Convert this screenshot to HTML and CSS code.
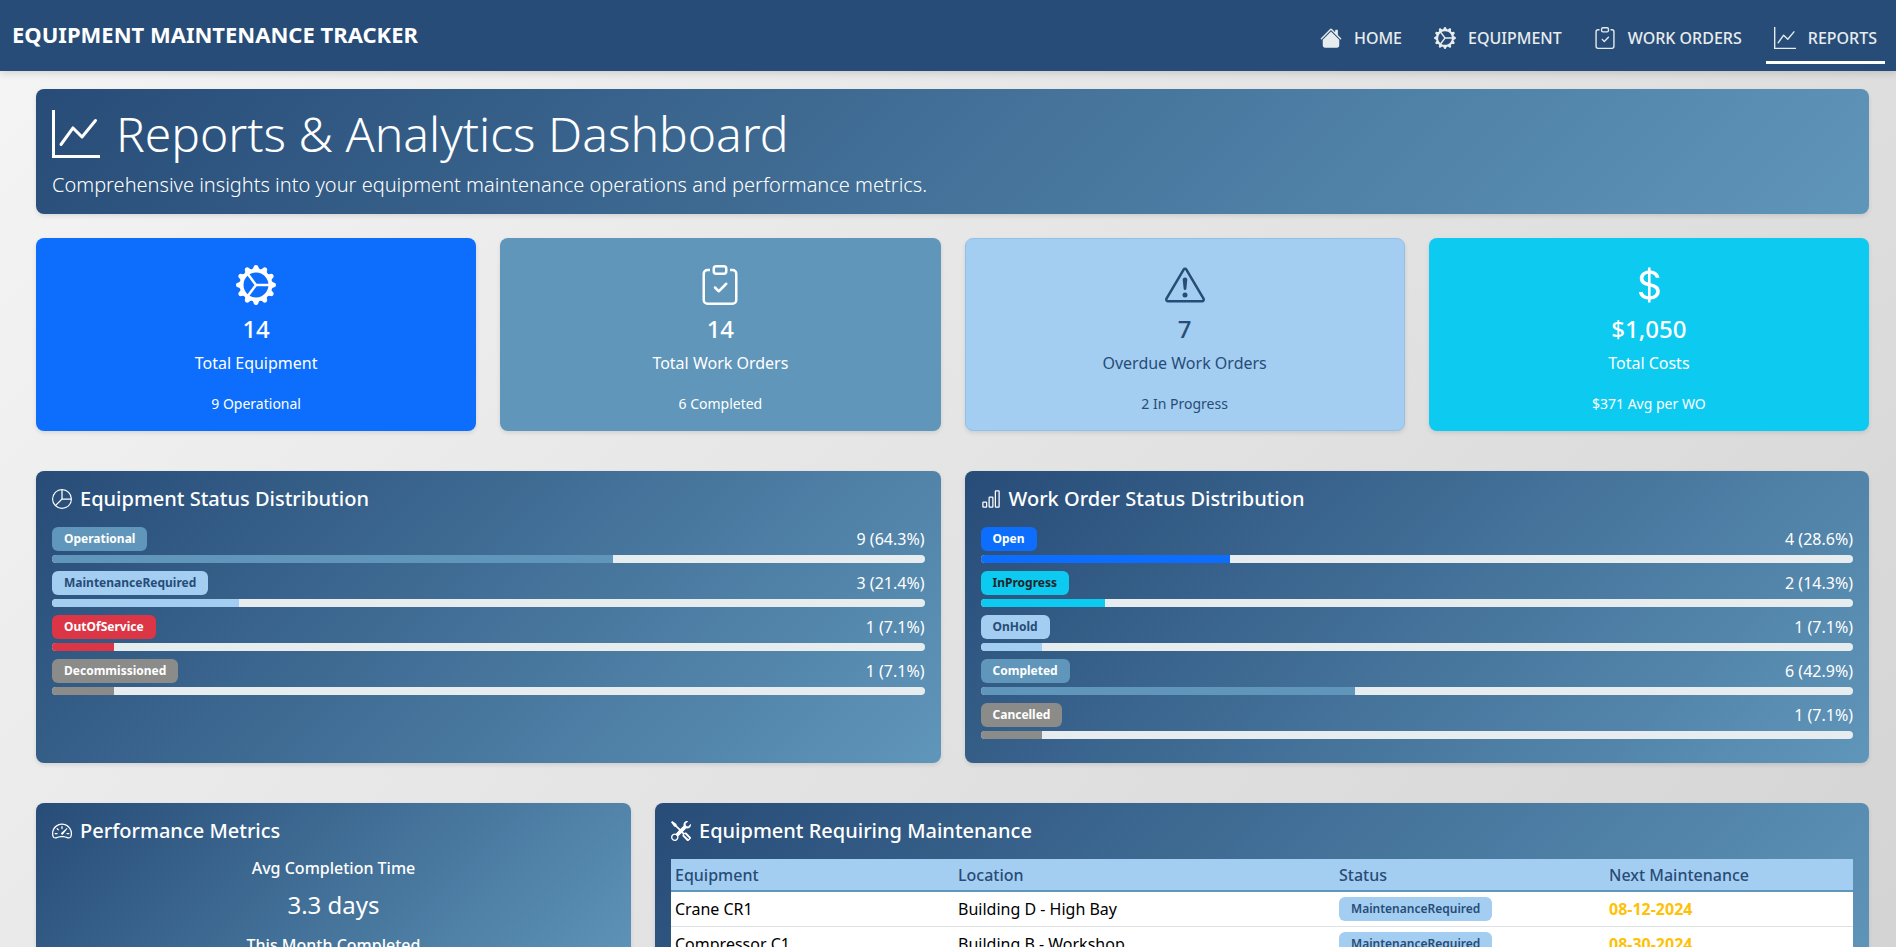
FILE: index.html
```html
<!DOCTYPE html>
<html lang="en">
<head>
    <meta charset="UTF-8">
    <meta name="viewport" content="width=device-width, initial-scale=1.0">
    <title>Reports - Equipment Maintenance Tracker</title>
    <link rel="stylesheet" href="styles.css">
</head>
<body>

    <svg class="sprite" xmlns="http://www.w3.org/2000/svg">
        <symbol id="i-home" viewBox="0 0 16 16"><path d="M8.707 1.5a1 1 0 0 0-1.414 0L.646 8.146a.5.5 0 0 0 .708.708L8 2.207l6.646 6.647a.5.5 0 0 0 .708-.708L13 5.793V2.5a.5.5 0 0 0-.5-.5h-1a.5.5 0 0 0-.5.5v1.293L8.707 1.5Z"/><path d="m8 3.293 6 6V13.5a1.5 1.5 0 0 1-1.5 1.5h-9A1.5 1.5 0 0 1 2 13.5V9.293l6-6Z"/></symbol>
        <symbol id="i-gear" viewBox="0 0 16 16"><path d="M7.068.727c.243-.97 1.62-.97 1.864 0l.071.286a.96.96 0 0 0 1.622.434l.205-.211c.695-.719 1.888-.03 1.613.931l-.08.284a.96.96 0 0 0 1.187 1.187l.283-.081c.96-.275 1.65.918.931 1.613l-.211.205a.96.96 0 0 0 .434 1.622l.286.071c.97.243.97 1.62 0 1.864l-.286.071a.96.96 0 0 0-.434 1.622l.211.205c.719.695.03 1.888-.931 1.613l-.284-.08a.96.96 0 0 0-1.187 1.187l.081.283c.275.96-.918 1.65-1.613.931l-.205-.211a.96.96 0 0 0-1.622.434l-.071.286c-.243.97-1.62.97-1.864 0l-.071-.286a.96.96 0 0 0-1.622-.434l-.205.211c-.695.719-1.888.03-1.613-.931l.08-.284a.96.96 0 0 0-1.186-1.187l-.284.081c-.96.275-1.65-.918-.931-1.613l.211-.205a.96.96 0 0 0-.434-1.622l-.286-.071c-.97-.243-.97-1.62 0-1.864l.286-.071a.96.96 0 0 0 .434-1.622l-.211-.205c-.719-.695-.03-1.888.931-1.613l.284.08a.96.96 0 0 0 1.187-1.186l-.081-.284c-.275-.96.918-1.65 1.613-.931l.205.211a.96.96 0 0 0 1.622-.434l.071-.286zM12.973 8.5H8.25l-2.834 3.779A4.998 4.998 0 0 0 12.973 8.5zm0-1a4.998 4.998 0 0 0-7.557-3.779l2.834 3.78h4.723zM5.048 3.967c-.03.021-.058.043-.087.065l.087-.065zm-.431.355A4.984 4.984 0 0 0 3.002 8c0 1.455.622 2.765 1.615 3.678L7.375 8 4.617 4.322zm.344 7.646.087.065-.087-.065z"/></symbol>
        <symbol id="i-clipboard" viewBox="0 0 16 16"><path fill-rule="evenodd" d="M10.854 7.146a.5.5 0 0 1 0 .708l-3 3a.5.5 0 0 1-.708 0l-1.5-1.5a.5.5 0 1 1 .708-.708L7.5 9.793l2.646-2.647a.5.5 0 0 1 .708 0z"/><path d="M4 1.5H3a2 2 0 0 0-2 2V14a2 2 0 0 0 2 2h10a2 2 0 0 0 2-2V3.5a2 2 0 0 0-2-2h-1v1h1a1 1 0 0 1 1 1V14a1 1 0 0 1-1 1H3a1 1 0 0 1-1-1V3.5a1 1 0 0 1 1-1h1v-1z"/><path d="M9.5 1a.5.5 0 0 1 .5.5v1a.5.5 0 0 1-.5.5h-3a.5.5 0 0 1-.5-.5v-1a.5.5 0 0 1 .5-.5h3zm-3-1A1.5 1.5 0 0 0 5 1.5v1A1.5 1.5 0 0 0 6.5 4h3A1.5 1.5 0 0 0 11 2.5v-1A1.5 1.5 0 0 0 9.5 0h-3z"/></symbol>
        <symbol id="i-graph" viewBox="0 0 16 16"><path fill-rule="evenodd" d="M0 0h1v15h15v1H0V0Zm14.817 3.113a.5.5 0 0 1 .07.704l-4.5 5.5a.5.5 0 0 1-.74.037L7.06 6.767l-3.656 5.027a.5.5 0 0 1-.808-.588l4-5.5a.5.5 0 0 1 .758-.06l2.609 2.61 4.15-5.073a.5.5 0 0 1 .704-.07Z"/></symbol>
        <symbol id="i-warning" viewBox="0 0 16 16"><path d="M7.938 2.016A.13.13 0 0 1 8.002 2a.13.13 0 0 1 .063.016.146.146 0 0 1 .054.057l6.857 11.667c.036.06.035.124.002.183a.163.163 0 0 1-.054.06.116.116 0 0 1-.066.017H1.146a.115.115 0 0 1-.066-.017.163.163 0 0 1-.054-.06.176.176 0 0 1 .002-.183L7.884 2.073a.147.147 0 0 1 .054-.057zm1.044-.45a1.13 1.13 0 0 0-1.96 0L.165 13.233c-.457.778.091 1.767.98 1.767h13.713c.889 0 1.438-.99.98-1.767L8.982 1.566z"/><path d="M7.002 12a1 1 0 1 1 2 0 1 1 0 0 1-2 0zM7.1 5.995a.905.905 0 1 1 1.8 0l-.35 3.507a.552.552 0 0 1-1.1 0L7.1 5.995z"/></symbol>
        <symbol id="i-dollar" viewBox="0 0 16 16"><path d="M4 10.781c.148 1.667 1.513 2.85 3.591 3.003V15h1.043v-1.216c2.27-.179 3.678-1.438 3.678-3.3 0-1.59-.947-2.51-2.956-3.028l-.722-.187V3.467c1.122.11 1.879.714 2.07 1.616h1.47c-.166-1.6-1.54-2.748-3.54-2.875V1H7.591v1.233c-1.939.23-3.27 1.472-3.27 3.156 0 1.454.966 2.483 2.661 2.917l.61.162v4.031c-1.149-.17-1.94-.8-2.131-1.718H4zm3.391-3.836c-1.043-.263-1.6-.825-1.6-1.616 0-.944.704-1.641 1.8-1.828v3.495l-.2-.05zm1.591 1.872c1.287.323 1.852.859 1.852 1.769 0 1.097-.826 1.828-2.2 1.939V8.73l.348.086z"/></symbol>
        <symbol id="i-pie" viewBox="0 0 16 16"><path d="M7.5 1.018a7 7 0 0 0-4.79 11.566L7.5 7.793V1.018zm1 0V7.5h6.482A7.001 7.001 0 0 0 8.5 1.018zM14.982 8.5H8.207l-4.79 4.79A7 7 0 0 0 14.982 8.5zM0 8a8 8 0 1 1 16 0A8 8 0 0 1 0 8z"/></symbol>
        <symbol id="i-bars" viewBox="0 0 16 16"><path d="M4 11H2v3h2v-3zm5-4H7v7h2V7zm5-5v12h-2V2h2zm-2-1a1 1 0 0 0-1 1v12a1 1 0 0 0 1 1h2a1 1 0 0 0 1-1V2a1 1 0 0 0-1-1h-2zM6 7a1 1 0 0 1 1-1h2a1 1 0 0 1 1 1v7a1 1 0 0 1-1 1H7a1 1 0 0 1-1-1V7zm-5 4a1 1 0 0 1 1-1h2a1 1 0 0 1 1 1v3a1 1 0 0 1-1 1H2a1 1 0 0 1-1-1v-3z"/></symbol>
        <symbol id="i-speed" viewBox="0 0 16 16"><path d="M8 4a.5.5 0 0 1 .5.5V6a.5.5 0 0 1-1 0V4.5A.5.5 0 0 1 8 4zM3.732 5.732a.5.5 0 0 1 .707 0l.915.914a.5.5 0 1 1-.708.708l-.914-.915a.5.5 0 0 1 0-.707zM2 10a.5.5 0 0 1 .5-.5h1.586a.5.5 0 0 1 0 1H2.5A.5.5 0 0 1 2 10zm9.5 0a.5.5 0 0 1 .5-.5h1.5a.5.5 0 0 1 0 1H12a.5.5 0 0 1-.5-.5zm.754-4.246a.389.389 0 0 0-.527-.02L7.547 9.31a.91.91 0 1 0 1.302 1.258l3.434-4.297a.389.389 0 0 0-.029-.518z"/><path fill-rule="evenodd" d="M0 10a8 8 0 1 1 15.547 2.661c-.442 1.253-1.845 1.602-2.932 1.25C11.309 13.488 9.475 13 8 13c-1.474 0-3.31.488-4.615.911-1.087.352-2.49.003-2.932-1.25A7.988 7.988 0 0 1 0 10zm8-7a7 7 0 0 0-6.603 9.329c.203.575.923.876 1.68.63C4.397 12.533 6.358 12 8 12s3.604.532 4.923.96c.757.245 1.477-.056 1.68-.631A7 7 0 0 0 8 3z"/></symbol>
        <symbol id="i-tools" viewBox="0 0 16 16"><path d="M1 0 0 1l2.2 3.081a1 1 0 0 0 .815.419h.07a1 1 0 0 1 .708.293l2.675 2.675-2.617 2.654A3.003 3.003 0 0 0 0 13a3 3 0 1 0 5.878-.851l2.654-2.617.968.968-.305.914a1 1 0 0 0 .242 1.023l3.27 3.27a.997.997 0 0 0 1.414 0l1.586-1.586a.997.997 0 0 0 0-1.414l-3.27-3.27a1 1 0 0 0-1.023-.242L10.5 9.5l-.96-.96 2.68-2.643A3.005 3.005 0 0 0 16 3c0-.269-.035-.53-.102-.777l-2.14 2.141L12 4l-.364-1.757L13.777.102a3 3 0 0 0-3.675 3.68L7.462 6.46 4.793 3.793a1 1 0 0 1-.293-.707v-.071a1 1 0 0 0-.419-.814L1 0Zm9.646 10.646a.5.5 0 0 1 .708 0l2.914 2.915a.5.5 0 0 1-.707.707l-2.915-2.914a.5.5 0 0 1 0-.708ZM3 11l.471.242.529.026.287.445.445.287.026.529L5 13l-.242.471-.026.529-.445.287-.287.445-.529.026L3 15l-.471-.242L2 14.732l-.287-.445L1.268 14l-.026-.529L1 13l.242-.471.026-.529.445-.287.287-.445.529-.026L3 11Z"/></symbol>
    </svg>

    <nav class="navbar">
        <a class="brand" href="#">Equipment Maintenance Tracker</a>
        <ul class="nav-links">
            <li><a href="#"><svg class="nav-icon"><use href="#i-home"/></svg>Home</a></li>
            <li><a href="#"><svg class="nav-icon"><use href="#i-gear"/></svg>Equipment</a></li>
            <li><a href="#"><svg class="nav-icon"><use href="#i-clipboard"/></svg>Work Orders</a></li>
            <li><a href="#" class="active"><svg class="nav-icon"><use href="#i-graph"/></svg>Reports</a></li>
        </ul>
    </nav>

    <main class="content">

        <header class="page-header">
            <h1><svg class="title-icon"><use href="#i-graph"/></svg>Reports &amp; Analytics Dashboard</h1>
            <p>Comprehensive insights into your equipment maintenance operations and performance metrics.</p>
        </header>

        <section class="row row-cards">
            <div class="stat-card stat-blue">
                <div class="stat-icon"><svg><use href="#i-gear"/></svg></div>
                <h3>14</h3>
                <p class="stat-label">Total Equipment</p>
                <small>9 Operational</small>
            </div>
            <div class="stat-card stat-steel">
                <div class="stat-icon"><svg><use href="#i-clipboard"/></svg></div>
                <h3>14</h3>
                <p class="stat-label">Total Work Orders</p>
                <small>6 Completed</small>
            </div>
            <div class="stat-card stat-light">
                <div class="stat-icon"><svg><use href="#i-warning"/></svg></div>
                <h3>7</h3>
                <p class="stat-label">Overdue Work Orders</p>
                <small>2 In Progress</small>
            </div>
            <div class="stat-card stat-cyan">
                <div class="stat-icon"><svg><use href="#i-dollar"/></svg></div>
                <h3>$1,050</h3>
                <p class="stat-label">Total Costs</p>
                <small>$371 Avg per WO</small>
            </div>
        </section>

        <section class="row row-charts">
            <div class="panel span-6">
                <h5><svg class="panel-icon"><use href="#i-pie"/></svg>Equipment Status Distribution</h5>
                <div class="dist-row">
                    <div class="dist-head"><span class="badge bg-steel">Operational</span><span>9 (64.3%)</span></div>
                    <div class="bar"><div class="bar-fill bg-steel" style="width: 64.3%"></div></div>
                </div>
                <div class="dist-row">
                    <div class="dist-head"><span class="badge bg-light">MaintenanceRequired</span><span>3 (21.4%)</span></div>
                    <div class="bar"><div class="bar-fill bg-light" style="width: 21.4%"></div></div>
                </div>
                <div class="dist-row">
                    <div class="dist-head"><span class="badge bg-red">OutOfService</span><span>1 (7.1%)</span></div>
                    <div class="bar"><div class="bar-fill bg-red" style="width: 7.1%"></div></div>
                </div>
                <div class="dist-row">
                    <div class="dist-head"><span class="badge bg-gray">Decommissioned</span><span>1 (7.1%)</span></div>
                    <div class="bar"><div class="bar-fill bg-gray" style="width: 7.1%"></div></div>
                </div>
            </div>
            <div class="panel span-6">
                <h5><svg class="panel-icon"><use href="#i-bars"/></svg>Work Order Status Distribution</h5>
                <div class="dist-row">
                    <div class="dist-head"><span class="badge bg-blue">Open</span><span>4 (28.6%)</span></div>
                    <div class="bar"><div class="bar-fill bg-blue" style="width: 28.6%"></div></div>
                </div>
                <div class="dist-row">
                    <div class="dist-head"><span class="badge bg-cyan">InProgress</span><span>2 (14.3%)</span></div>
                    <div class="bar"><div class="bar-fill bg-cyan" style="width: 14.3%"></div></div>
                </div>
                <div class="dist-row">
                    <div class="dist-head"><span class="badge bg-light">OnHold</span><span>1 (7.1%)</span></div>
                    <div class="bar"><div class="bar-fill bg-light" style="width: 7.1%"></div></div>
                </div>
                <div class="dist-row">
                    <div class="dist-head"><span class="badge bg-steel">Completed</span><span>6 (42.9%)</span></div>
                    <div class="bar"><div class="bar-fill bg-steel" style="width: 42.9%"></div></div>
                </div>
                <div class="dist-row">
                    <div class="dist-head"><span class="badge bg-gray">Cancelled</span><span>1 (7.1%)</span></div>
                    <div class="bar"><div class="bar-fill bg-gray" style="width: 7.1%"></div></div>
                </div>
            </div>
        </section>

        <section class="row">
            <div class="panel span-4">
                <h5><svg class="panel-icon"><use href="#i-speed"/></svg>Performance Metrics</h5>
                <div class="metric">
                    <h6>Avg Completion Time</h6>
                    <p>3.3 days</p>
                </div>
                <div class="metric">
                    <h6>This Month Completed</h6>
                </div>
            </div>
            <div class="panel span-8">
                <h5><svg class="panel-icon"><use href="#i-tools"/></svg>Equipment Requiring Maintenance</h5>
                <table class="maint-table">
                    <colgroup>
                        <col class="col-equipment">
                        <col class="col-location">
                        <col class="col-status">
                        <col class="col-next">
                    </colgroup>
                    <thead>
                        <tr><th>Equipment</th><th>Location</th><th>Status</th><th>Next Maintenance</th></tr>
                    </thead>
                    <tbody>
                        <tr>
                            <td>Crane CR1</td>
                            <td>Building D - High Bay</td>
                            <td><span class="badge bg-light">MaintenanceRequired</span></td>
                            <td class="due">08-12-2024</td>
                        </tr>
                        <tr>
                            <td>Compressor C1</td>
                            <td>Building B - Workshop</td>
                            <td><span class="badge bg-light">MaintenanceRequired</span></td>
                            <td class="due">08-30-2024</td>
                        </tr>
                    </tbody>
                </table>
            </div>
        </section>

    </main>

</body>
</html>
```

FILE: styles.css
```css
* {
    margin: 0;
    padding: 0;
    box-sizing: border-box;
}

body {
    font-family: "Noto Sans", Arial, sans-serif;
    font-size: 16px;
    line-height: 1.5;
    color: #212529;
    background: linear-gradient(135deg, #f5f5f5 0%, #d4d4d4 100%) fixed;
}

.sprite {
    display: none;
}

svg {
    fill: currentColor;
}

/* top bar */
.navbar {
    display: flex;
    justify-content: space-between;
    align-items: center;
    height: 71px;
    padding: 0 11px 0 12px;
    background-color: #274c77;
    box-shadow: 0 2px 8px rgba(0, 0, 0, 0.15);
}

.brand {
    color: white;
    font-size: 22px;
    font-weight: 700;
    text-transform: uppercase;
    text-decoration: none;
    padding-bottom: 2px;
}

.nav-links {
    list-style-type: none;
    display: flex;
    gap: 16px;
}

.nav-links a {
    display: flex;
    align-items: center;
    gap: 12px;
    height: 48px;
    padding: 0 8px;
    margin-top: 8px;
    color: #e7ecef;
    font-weight: 500;
    text-transform: uppercase;
    text-decoration: none;
    border-bottom: 3px solid transparent;
}

.nav-links a.active {
    border-bottom-color: white;
}

.nav-icon {
    width: 22px;
    height: 22px;
}

/* page */
.content {
    padding: 18px 27px 40px 36px;
}

.page-header {
    padding: 16px;
    margin-bottom: 24px;
    color: white;
    border-radius: 8px;
    background: linear-gradient(135deg, #274c77, #6096ba);
    box-shadow: 0 2px 4px rgba(0, 0, 0, 0.1);
}

.page-header h1 {
    display: flex;
    align-items: center;
    gap: 16px;
    font-size: 48px;
    font-weight: 300;
    line-height: 1.2;
    margin-bottom: 8px;
}

.title-icon {
    width: 48px;
    height: 48px;
}

.page-header p {
    font-size: 20px;
    font-weight: 300;
    line-height: 1.35;
}

.row {
    display: grid;
    grid-template-columns: repeat(12, 1fr);
    gap: 24px;
    margin-bottom: 40px;
}

/* stat cards */
.stat-card {
    grid-column: span 3;
    padding: 16px;
    text-align: center;
    color: white;
    border: 1px solid transparent;
    border-radius: 8px;
    box-shadow: 0 2px 4px rgba(0, 0, 0, 0.1);
}

.stat-blue { background-color: #0d6efd; }
.stat-steel { background-color: #6096ba; }
.stat-cyan { background-color: #0dcaf0; }

.stat-light {
    background-color: #a3cef1;
    border-color: #93c0e8;
    color: #274c77;
}

.stat-icon {
    height: 60px;
    display: flex;
    justify-content: center;
    align-items: center;
}

.stat-icon svg {
    width: 40px;
    height: 40px;
}

.stat-card h3 {
    font-size: 24px;
    font-weight: 500;
    line-height: 1.2;
    margin-bottom: 8px;
}

.stat-label {
    margin-bottom: 18px;
}

.stat-card small {
    display: block;
    font-size: 14px;
}

/* panels */
.panel {
    padding: 16px;
    color: white;
    border-radius: 8px;
    background: linear-gradient(135deg, #274c77, #6096ba);
    box-shadow: 0 2px 4px rgba(0, 0, 0, 0.1);
}

.span-4 { grid-column: span 4; }
.span-6 { grid-column: span 6; }
.span-8 { grid-column: span 8; }

.panel h5 {
    display: flex;
    align-items: center;
    gap: 8px;
    font-size: 20px;
    font-weight: 500;
    line-height: 1.2;
    margin-bottom: 16px;
}

.panel-icon {
    width: 20px;
    height: 20px;
}

.dist-row {
    margin-bottom: 8px;
}

.dist-head {
    display: flex;
    justify-content: space-between;
    align-items: center;
    height: 24px;
    margin-bottom: 4px;
}

.badge {
    display: inline-block;
    padding: 4px 12px;
    font-size: 12px;
    font-weight: 700;
    line-height: 16px;
    border-radius: 6px;
    color: white;
}

.bar {
    height: 8px;
    border-radius: 4px;
    overflow: hidden;
    background-color: #e7ecef;
}

.bar-fill {
    height: 100%;
}

.bg-blue { background-color: #0d6efd; }
.bg-steel { background-color: #6096ba; }
.bg-red { background-color: #dc3545; }
.bg-gray { background-color: #8b8c89; }

.bg-cyan {
    background-color: #0dcaf0;
    color: #212529;
}

.bg-light {
    background-color: #a3cef1;
    color: #274c77;
}

/* performance metrics */
.metric {
    text-align: center;
}

.metric h6 {
    font-size: 16px;
    font-weight: 500;
    line-height: 1.2;
    margin-bottom: 12px;
}

.metric p {
    font-size: 24px;
    line-height: 1.2;
    margin-bottom: 17px;
}

/* maintenance table */
.maint-table {
    width: 100%;
    table-layout: fixed;
    border-collapse: collapse;
    background-color: white;
    color: #000;
}

.col-equipment { width: 283px; }
.col-location { width: 381px; }
.col-status { width: 270px; }

.maint-table th {
    height: 32px;
    padding: 0 4px;
    text-align: left;
    font-weight: 500;
    color: #274c77;
    background-color: #a3cef1;
    border-bottom: 2px solid #6096ba;
}

.maint-table td {
    height: 35px;
    padding: 0 4px;
    border-bottom: 1px solid #dee2e6;
}

.maint-table td .badge {
    display: block;
    width: fit-content;
    font-weight: 600;
}

.due {
    color: #ffc107;
    font-weight: 700;
}
```
